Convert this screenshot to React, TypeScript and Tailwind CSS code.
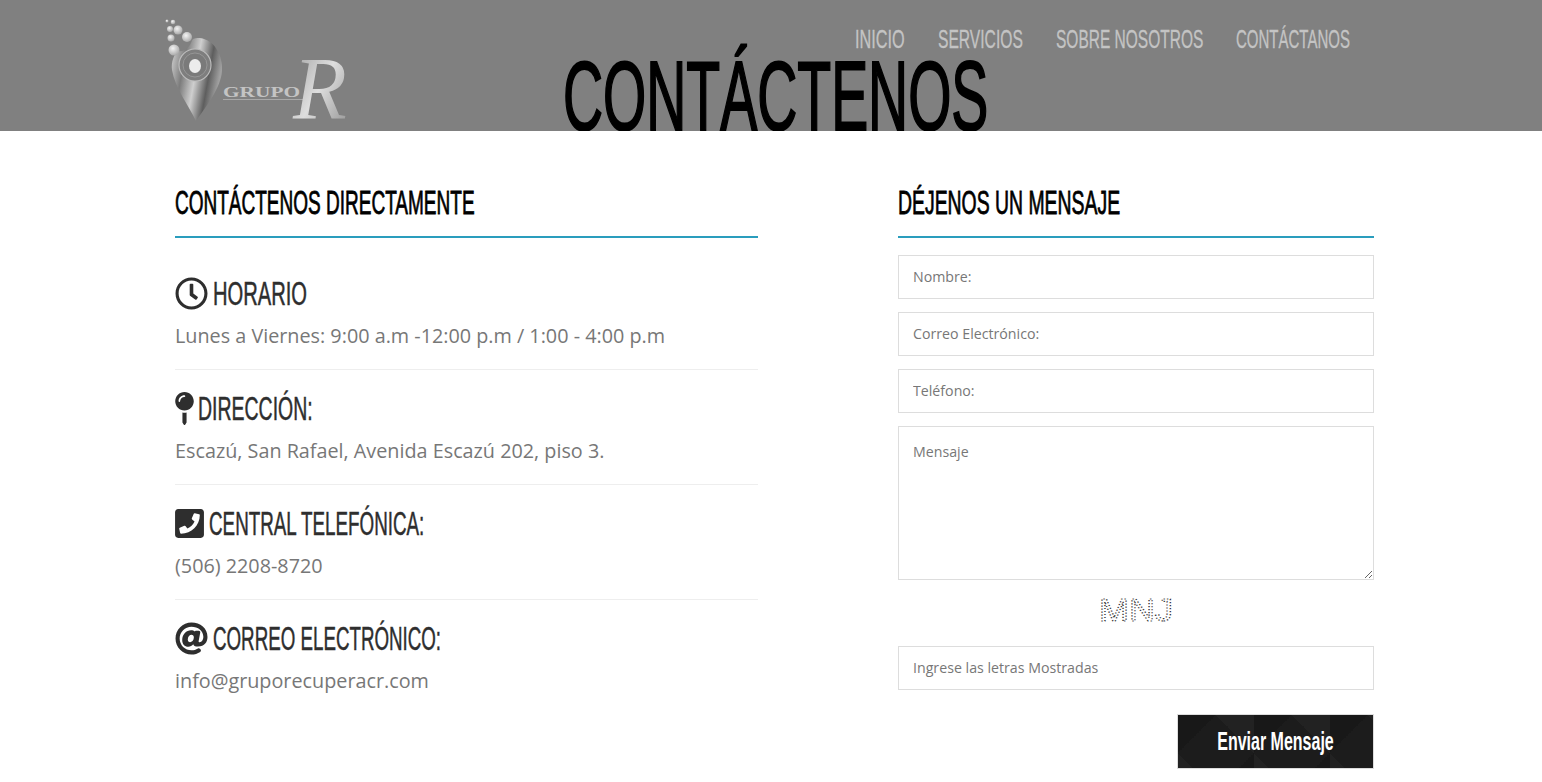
import { FaAt, FaMapPin, FaPhoneSquare, FaRegClock } from 'react-icons/fa';

const Logo = () => (
  <svg width="190" height="107" viewBox="0 0 190 107" className="block overflow-visible">
    <defs>
      <linearGradient id="pin" x1="0" y1="0" x2="1" y2="0.3">
        <stop offset="0" stopColor="#dcdcdc" />
        <stop offset="0.3" stopColor="#7c7c7c" />
        <stop offset="0.55" stopColor="#cfcfcf" />
        <stop offset="0.8" stopColor="#5e5e5e" />
        <stop offset="1" stopColor="#a0a0a0" />
      </linearGradient>
      <linearGradient id="arr" x1="0" y1="0" x2="1" y2="1">
        <stop offset="0" stopColor="#9a9a9a" />
        <stop offset="0.5" stopColor="#dedede" />
        <stop offset="1" stopColor="#8e8e8e" />
      </linearGradient>
      <radialGradient id="ball" cx="0.4" cy="0.35" r="0.7">
        <stop offset="0" stopColor="#f4f4f4" />
        <stop offset="1" stopColor="#a4a4a4" />
      </radialGradient>
    </defs>
    <path d="M35 20C50 22 58 38 57 53C56 70 40 90 31 103C24 88 10 70 7 52C6 44 9 36 13 33C20 35 26 27 27 22C29 20 32 20 35 20Z" fill="url(#pin)" />
    <circle cx="30" cy="47" r="16" fill="#7e7e7e" stroke="#bdbdbd" strokeWidth="1.2" />
    <circle cx="30" cy="47" r="12" fill="#7a7a7a" stroke="#9c9c9c" strokeWidth="0.8" />
    <ellipse cx="30" cy="48" rx="6" ry="7" fill="#ececec" />
    <circle cx="9" cy="32" r="5.5" fill="url(#ball)" />
    <circle cx="22" cy="19" r="5" fill="url(#ball)" />
    <circle cx="6" cy="20" r="3.5" fill="url(#ball)" />
    <circle cx="13" cy="12" r="4.5" fill="url(#ball)" />
    <circle cx="5" cy="11" r="3" fill="url(#ball)" />
    <circle cx="8" cy="4" r="2.3" fill="url(#ball)" />
    <circle cx="2" cy="3" r="1.5" fill="url(#ball)" />
    <text x="58" y="79" fontFamily="'Liberation Serif', serif" fontWeight="700" fontSize="14" textLength="77" lengthAdjust="spacingAndGlyphs" fill="#c4c4c4">GRUPO</text>
    <rect x="58" y="81" width="80" height="1" fill="#a8a8a8" />
    <text x="128" y="100" fontFamily="'Liberation Serif', serif" fontStyle="italic" fontSize="88" fill="url(#arr)">R</text>
  </svg>
);

const navItems = [
  { label: 'INICIO', box: 'w-[50px]', fit: 'scale-x-[0.65]' },
  { label: 'SERVICIOS', box: 'w-[85px]', fit: 'scale-x-[0.625]' },
  { label: 'SOBRE NOSOTROS', box: 'w-[147px]', fit: 'scale-x-[0.62]' },
  { label: 'CONTÁCTANOS', box: 'w-[115px]', fit: 'scale-x-[0.6]' },
];

const contactRows = [
  { icon: <FaRegClock className="text-[33px] shrink-0" />, iconBox: 'w-[38px]', title: 'HORARIO', fit: 'scale-x-[0.61]', text: 'Lunes a Viernes: 9:00 a.m -12:00 p.m / 1:00 - 4:00 p.m' },
  { icon: <FaMapPin className="text-[33px] shrink-0 -ml-[7px]" />, iconBox: 'w-[23px]', title: 'DIRECCIÓN:', fit: 'scale-x-[0.59]', text: 'Escazú, San Rafael, Avenida Escazú 202, piso 3.' },
  { icon: <FaPhoneSquare className="text-[33px] shrink-0 -ml-[2px]" />, iconBox: 'w-[34px]', title: 'CENTRAL TELEFÓNICA:', fit: 'scale-x-[0.57]', text: '(506) 2208-8720' },
  { icon: <FaAt className="text-[33px] shrink-0" />, iconBox: 'w-[38px]', title: 'CORREO ELECTRÓNICO:', fit: 'scale-x-[0.568]', text: 'info@gruporecuperacr.com' },
];

const fieldClass = "block w-full h-[44px] border border-[#ddd] bg-white px-[14px] pb-[1px] text-[14.2px] text-[#777] placeholder:text-[#777] outline-none font-['Open_Sans',sans-serif]";

export default function App() {
  return (
    <div className="bg-white font-['Open_Sans',sans-serif] overflow-hidden">
      {/* header */}
      <header className="h-[131px] bg-[#808080] overflow-hidden grid">
        <div className="[grid-area:1/1] flex justify-center items-end pl-[9px]">
          <h1 className="font-['Liberation_Sans',sans-serif] text-[98px] leading-[70px] text-black [-webkit-text-stroke:2px_#000] whitespace-nowrap scale-x-[0.566]">
            CONTÁCTENOS
          </h1>
        </div>
        <div className="[grid-area:1/1] flex items-start justify-between pl-[165px] pr-[191px]">
          <div className="pt-[18px]">
            <Logo />
          </div>
          <nav className="flex gap-[33px] pt-[24px]">
            {navItems.map((item) => (
              <a key={item.label} className={`${item.box} block h-[30px] leading-[30px] text-[25px] text-[#c4c4c4] font-['Liberation_Sans',sans-serif] [-webkit-text-stroke:0.3px_#c4c4c4]`}>
                <span className={`block w-fit whitespace-nowrap origin-left ${item.fit}`}>{item.label}</span>
              </a>
            ))}
          </nav>
        </div>
      </header>

      <main className="flex pl-[175px] gap-[140px] pb-[14px]">
        {/* left column */}
        <section className="w-[583px]">
          <div className="pt-[52px] pb-[13px] border-b-2 border-[#2a9dbd]">
            <h3 className="h-[40px] leading-[40px] text-[33px] text-black [-webkit-text-stroke:0.8px_#000] font-['Liberation_Sans',sans-serif] whitespace-nowrap origin-left scale-x-[0.576]">
              CONTÁCTENOS DIRECTAMENTE
            </h3>
          </div>
          <div className="pt-[35px]">
            {contactRows.map((row, i) => (
              <div key={row.title} className={i < 3 ? 'pb-[17px] mb-[18px] border-b border-[#eee]' : ''}>
                <div className="h-[40px] flex items-center text-[#2e2e2e]">
                  <span className={`${row.iconBox} shrink-0 flex items-center`}>{row.icon}</span>
                  <h4 className={`text-[33px] leading-[40px] pt-[2px] font-['Liberation_Sans',sans-serif] [-webkit-text-stroke:0.5px_#2e2e2e] whitespace-nowrap origin-left ${row.fit}`}>
                    {row.title}
                  </h4>
                </div>
                <p className="mt-[7px] h-[32px] leading-[32px] text-[19.8px] text-[#777]">{row.text}</p>
              </div>
            ))}
          </div>
        </section>

        {/* right column */}
        <section className="w-[476px]">
          <div className="pt-[52px] pb-[13px] border-b-2 border-[#2a9dbd]">
            <h3 className="h-[40px] leading-[40px] text-[33px] text-black [-webkit-text-stroke:0.8px_#000] font-['Liberation_Sans',sans-serif] whitespace-nowrap origin-left scale-x-[0.588]">
              DÉJENOS UN MENSAJE
            </h3>
          </div>
          <form className="pt-[17px] flex flex-col gap-[13px]">
            <input className={fieldClass} placeholder="Nombre:" />
            <input className={fieldClass} placeholder="Correo Electrónico:" />
            <input className={fieldClass} placeholder="Teléfono:" />
            <textarea className="block w-full h-[154px] border border-[#ddd] bg-white px-[14px] py-[14px] text-[14.2px] leading-[22px] text-[#777] placeholder:text-[#777] outline-none" placeholder="Mensaje" />
            <div className="flex justify-center h-[40px] items-start pt-[3px]">
              <svg width="80" height="28" viewBox="0 0 80 28" className="block overflow-visible">
                <text x="3" y="25" fontFamily="'Liberation Sans', sans-serif" fontSize="32" textLength="74" lengthAdjust="spacingAndGlyphs" fill="none" stroke="#333" strokeWidth="1.2" strokeDasharray="1.2 1.8">MNJ</text>
              </svg>
            </div>
            <input className={fieldClass} placeholder="Ingrese las letras Mostradas" />
            <div className="flex justify-end pt-[11px]">
              <button type="button" className="w-[197px] h-[55px] border border-[#ddd] bg-[#1c1c1c] [background-image:linear-gradient(45deg,#ffffff07_25%,transparent_25%,transparent_75%,#ffffff07_75%),linear-gradient(-45deg,#00000022_25%,transparent_25%,transparent_75%,#00000022_75%)] bg-[length:76px_76px] text-white font-['Liberation_Sans',sans-serif] font-bold text-[25px] overflow-hidden">
                <span className="block whitespace-nowrap scale-x-[0.64]">Enviar Mensaje</span>
              </button>
            </div>
          </form>
        </section>
      </main>
    </div>
  );
}
